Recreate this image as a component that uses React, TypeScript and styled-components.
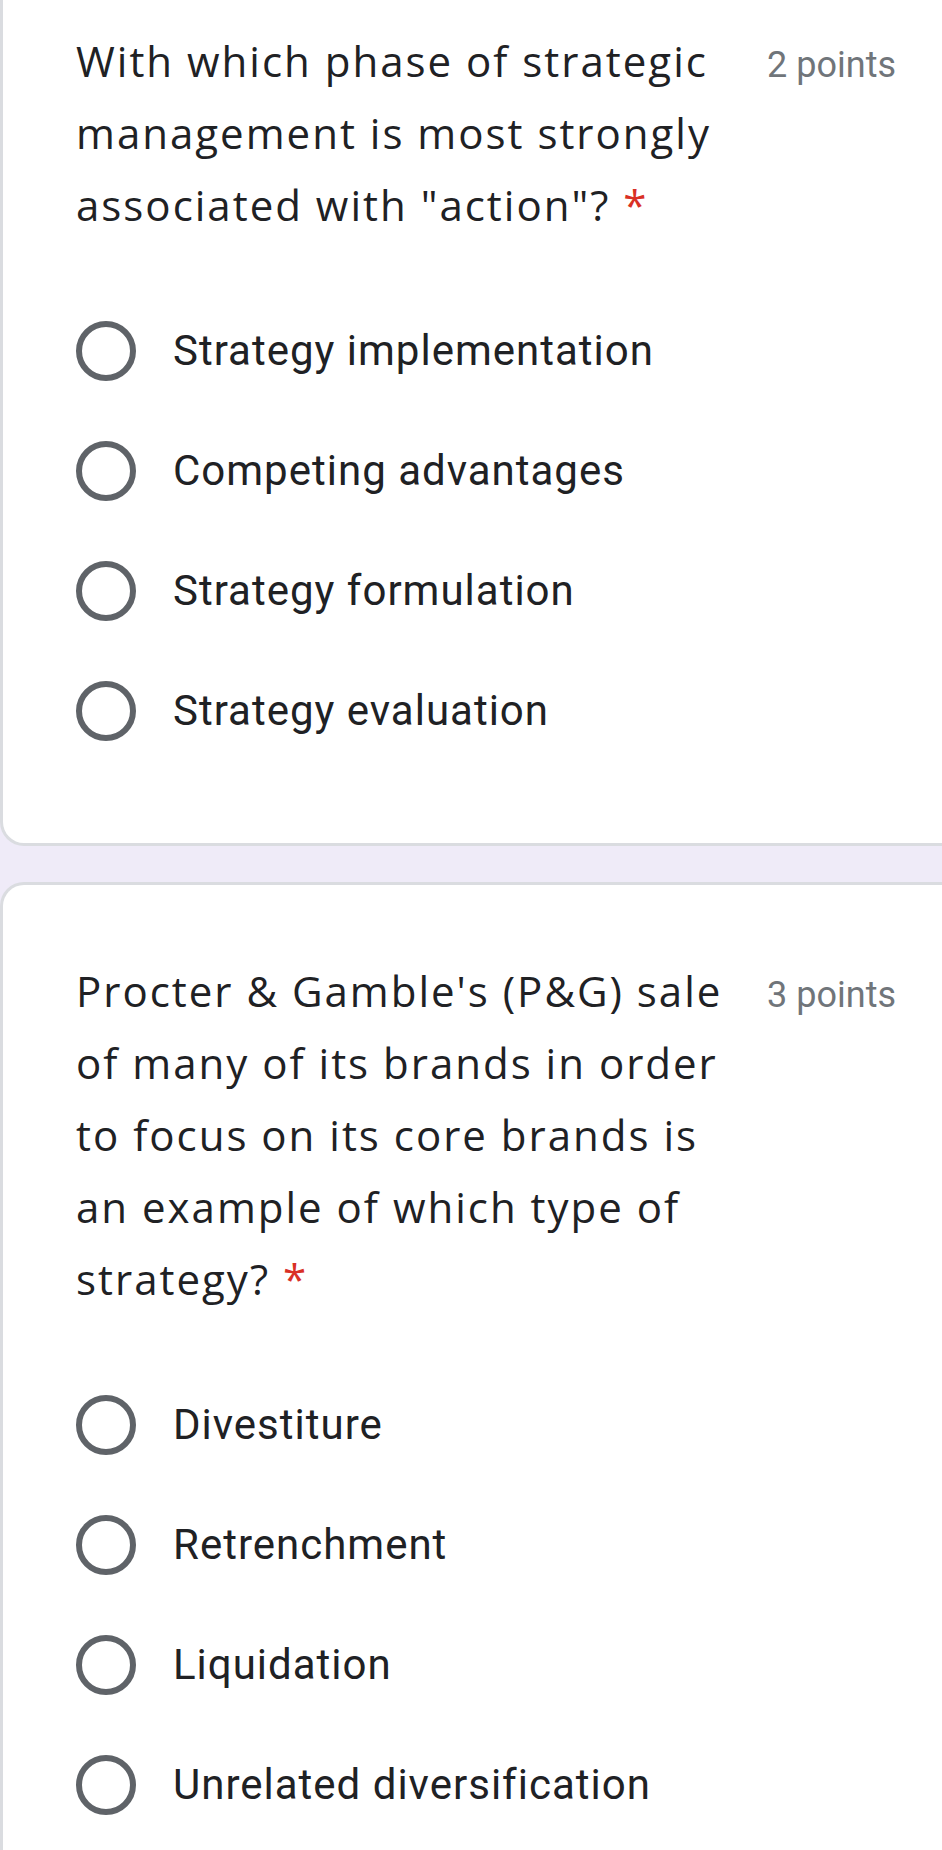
import React from 'react';
import styled, { createGlobalStyle } from 'styled-components';

const GlobalStyle = createGlobalStyle`
  html, body {
    margin: 0;
    padding: 0;
    background: #efebf8;
  }
  body {
    overflow: hidden;
  }
`;

// the form is scrolled: the first card starts above the top edge
const Page = styled.div`
  display: flex;
  flex-direction: column;
  gap: 36px;
  margin-top: -48px;
`;

const Card = styled.section`
  background: #fff;
  border: 3px solid #dadce0;
  border-right: none;
  border-radius: 24px 0 0 24px;
  padding: 70px 46px 102px 73px;
`;

const Header = styled.div`
  display: flex;
  align-items: baseline;
`;

const Title = styled.div`
  flex: 1;
  font-family: 'Open Sans', Lato, sans-serif;
  font-size: 42px;
  line-height: 72px;
  letter-spacing: 2px;
  color: #202124;
`;

const Required = styled.span`
  color: #d93025;
`;

const Points = styled.span`
  flex-shrink: 0;
  margin-left: 26px;
  font-family: Roboto, sans-serif;
  font-size: 36px;
  color: #70757a;
`;

const Options = styled.div`
  display: flex;
  flex-direction: column;
  gap: 60px;
  margin-top: 80px;
`;

const Option = styled.label`
  display: flex;
  align-items: center;
  gap: 37px;
`;

const Radio = styled.span`
  flex-shrink: 0;
  box-sizing: border-box;
  width: 60px;
  height: 60px;
  border: 6px solid #5f6368;
  border-radius: 50%;
`;

const OptionText = styled.span`
  font-family: Roboto, sans-serif;
  font-size: 42px;
  line-height: 60px;
  letter-spacing: 1px;
  color: #202124;
`;

interface IQuestion {
  title: string;
  points: number;
  options: string[];
}

const questions: IQuestion[] = [
  {
    title: 'With which phase of strategic management is most strongly associated with "action"?',
    points: 2,
    options: [
      'Strategy implementation',
      'Competing advantages',
      'Strategy formulation',
      'Strategy evaluation',
    ],
  },
  {
    title:
      "Procter & Gamble's (P&G) sale of many of its brands in order to focus on its core brands is an example of which type of strategy?",
    points: 3,
    options: ['Divestiture', 'Retrenchment', 'Liquidation', 'Unrelated diversification'],
  },
];

const Question: React.FC<{ q: IQuestion }> = ({ q }) => (
  <Card>
    <Header>
      <Title>
        {q.title} <Required>*</Required>
      </Title>
      <Points>{q.points} points</Points>
    </Header>
    <Options>
      {q.options.map((o) => (
        <Option key={o}>
          <Radio />
          <OptionText>{o}</OptionText>
        </Option>
      ))}
    </Options>
  </Card>
);

const App: React.FC = () => {
  return (
    <>
      <GlobalStyle />
      <Page>
        {questions.map((q) => (
          <Question key={q.points} q={q} />
        ))}
      </Page>
    </>
  );
};

export default App;
